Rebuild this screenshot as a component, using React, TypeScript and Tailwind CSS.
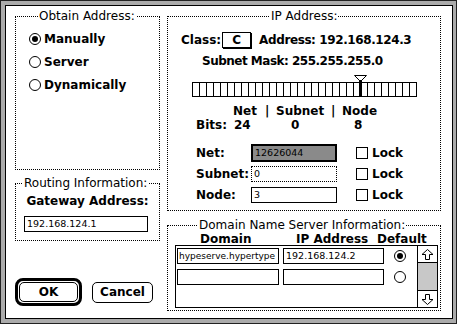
import React from "react";

function Radio({ checked }: { checked?: boolean }) {
  return (
    <span className="flex w-[12px] h-[12px] shrink-0 items-center justify-center rounded-full border border-black bg-white">
      {checked && <span className="w-[6px] h-[6px] rounded-full bg-black" />}
    </span>
  );
}

function Check() {
  return <span className="block w-[12px] h-[12px] shrink-0 border border-black bg-white" />;
}

function Group({
  title,
  legendClass,
  className,
  children,
}: {
  title: string;
  legendClass: string;
  className: string;
  children: React.ReactNode;
}) {
  return (
    <fieldset className={"border border-dotted border-black " + className}>
      <legend className={"px-[1px] text-[12px] leading-[14px] font-normal " + legendClass}>
        {title}
      </legend>
      {children}
    </fieldset>
  );
}

function MaskSlider() {
  const cells = Array(32).fill(0);
  return (
    <div className="relative ml-[24px] mt-[7px] h-[22px] pt-[7px]">
      <div className="flex border-l border-black">
        {cells.map((_, i) => (
          <span key={i} className="w-[7px] h-[15px] border-y border-r border-black" />
        ))}
      </div>
      <svg className="absolute top-0 left-[162px]" width="13" height="22" viewBox="0 0 13 22">
        <polygon points="0.5,0.5 12.5,0.5 7.5,5.5 5.5,5.5" fill="white" stroke="black" />
        <rect x="5" y="5" width="3" height="17" fill="black" />
      </svg>
    </div>
  );
}

function LockRow({ label, field }: { label: string; field: React.ReactNode }) {
  return (
    <div className="flex h-[18px] items-center pl-[28px]">
      <span className="w-[55px] font-bold">{label}</span>
      {field}
      <span className="ml-[19px] flex">
        <Check />
      </span>
      <span className="ml-[4px] font-bold">Lock</span>
    </div>
  );
}

function ArrowBtn({ down }: { down?: boolean }) {
  return (
    <div className="flex h-[16px] items-center justify-center bg-white">
      <svg width="13" height="11" viewBox="0 0 13 11">
        <polygon
          points={down ? "4.5,0.5 8.5,0.5 8.5,5.5 12,5.5 6.5,10.5 1,5.5 4.5,5.5" : "6.5,0.5 12,5.5 8.5,5.5 8.5,10.5 4.5,10.5 4.5,5.5 1,5.5"}
          fill="white"
          stroke="black"
        />
      </svg>
    </div>
  );
}

export default function App() {
  return (
    <div className="w-[457px] h-[324px] border border-[#222] bg-[#ababab] pt-[4px] pl-[4px] pr-[3px] pb-[4px] font-['DejaVu_Sans',sans-serif] text-[12px] leading-[14px] text-black">
      <div className="flex h-full gap-[7px] border border-black bg-white pl-[9px] pt-[3px]">
        {/* left column */}
        <div className="flex w-[145px] flex-col">
          <Group title="Obtain Address:" legendClass="ml-[22px]" className="h-[161px]">
            <div className="flex flex-col pt-[4px] pl-[13px]">
              <label className="flex h-[23px] items-center gap-[3px] font-bold">
                <Radio checked /> Manually
              </label>
              <label className="flex h-[23px] items-center gap-[3px] font-bold">
                <Radio /> Server
              </label>
              <label className="flex h-[23px] items-center gap-[3px] font-bold">
                <Radio /> Dynamically
              </label>
            </div>
          </Group>

          <Group title="Routing Information:" legendClass="ml-[7px]" className="mt-[6px] h-[65px]">
            <div className="mt-[4px] text-center font-bold">Gateway Address:</div>
            <div className="ml-[8px] mt-[8px] flex h-[16px] w-[124px] items-center border border-black pl-[2px] text-[9.5px]">
              192.168.124.1
            </div>
          </Group>

          <div className="mt-[37px] flex items-center">
            <div className="rounded-[8px] border-[3px] border-black p-[1px]">
              <button className="flex h-[20px] w-[59px] items-center justify-center rounded-[5px] border border-black font-bold">
                OK
              </button>
            </div>
            <button className="ml-[10px] flex h-[21px] w-[61px] items-center justify-center rounded-[5px] border border-black font-bold">
              Cancel
            </button>
          </div>
        </div>

        {/* right column */}
        <div className="flex w-[274px] flex-col">
          <Group title="IP Address:" legendClass="ml-[102px]" className="h-[202px]">
            <div className="ml-[13px] mt-[8px] flex h-[17px] items-center font-bold">
              <span>Class:</span>
              <span className="ml-[1px] flex h-[16px] w-[29px] items-center justify-center border border-black shadow-[1px_1px_0_#000]">
                C
              </span>
              <span className="ml-[8px] tracking-[-0.4px]">Address: 192.168.124.3</span>
            </div>
            <div className="ml-[34px] mt-[6px] font-bold tracking-[-0.5px]">Subnet Mask: 255.255.255.0</div>
            <MaskSlider />
            <div className="mt-[7px] flex pl-[65px] font-bold">
              <span className="w-[32px]">Net</span>
              <span className="w-[11px]">|</span>
              <span className="w-[55px]">Subnet</span>
              <span className="w-[11px]">|</span>
              <span>Node</span>
            </div>
            <div className="flex pl-[28px] font-bold">
              <span className="w-[38px]">Bits:</span>
              <span className="w-[57px]">24</span>
              <span className="w-[63px]">0</span>
              <span>8</span>
            </div>
            <div className="mt-[12px] flex flex-col gap-[3px]">
              <LockRow
                label="Net:"
                field={
                  <span className="flex h-[18px] w-[86px] items-center border-2 border-black bg-[#8a8a8a] pl-[2px] text-[9.5px]">
                    12626044
                  </span>
                }
              />
              <LockRow
                label="Subnet:"
                field={
                  <span className="flex h-[16px] w-[86px] items-center border border-dotted border-black pl-[2px] text-[9.5px]">
                    0
                  </span>
                }
              />
              <LockRow
                label="Node:"
                field={
                  <span className="flex h-[16px] w-[86px] items-center border border-black pl-[2px] text-[9.5px]">
                    3
                  </span>
                }
              />
            </div>
          </Group>

          <Group title="Domain Name Server Information:" legendClass="ml-[30px]" className="mt-[7px] h-[93px]">
            <div className="mt-[1px] flex h-[12px] items-center pl-[32px] font-bold">
              <span className="w-[96px]">Domain</span>
              <span className="w-[81px]">IP Address</span>
              <span>Default</span>
            </div>
            <div className="ml-[7px] flex h-[63px] w-[263px] border border-black">
              <div className="flex flex-1 flex-col gap-[5px] pt-[2px] pl-[1px]">
                <div className="flex items-center">
                  <span className="flex h-[16px] w-[102px] items-center overflow-hidden whitespace-nowrap border border-black pl-[1px] text-[9px]">
                    hypeserve.hypertype
                  </span>
                  <span className="ml-[4px] flex h-[16px] w-[101px] items-center border border-black pl-[2px] text-[9.5px]">
                    192.168.124.2
                  </span>
                  <span className="ml-[10px] flex">
                    <Radio checked />
                  </span>
                </div>
                <div className="flex items-center">
                  <span className="h-[16px] w-[102px] border border-black" />
                  <span className="ml-[4px] h-[16px] w-[101px] border border-black" />
                  <span className="ml-[10px] flex">
                    <Radio />
                  </span>
                </div>
              </div>
              <div className="flex w-[20px] flex-col border-l border-black">
                <div className="border-b border-black">
                  <ArrowBtn />
                </div>
                <div className="flex-1 bg-[#c8c8c8]" />
                <div className="border-t border-black">
                  <ArrowBtn down />
                </div>
              </div>
            </div>
          </Group>
        </div>
      </div>
    </div>
  );
}
